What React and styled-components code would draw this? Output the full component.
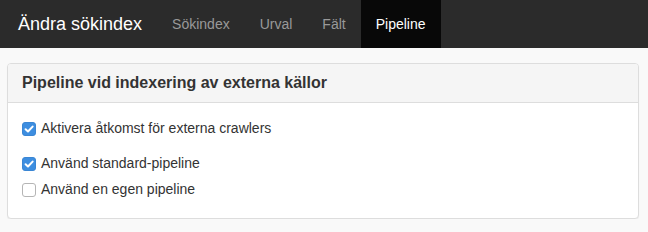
import React, { useState } from 'react';
import styled, { createGlobalStyle } from 'styled-components';

const GlobalStyle = createGlobalStyle`
  html, body {
    margin: 0;
    padding: 0;
    background: #f9f9f9;
    font-family: "Liberation Sans", Arial, Helvetica, sans-serif;
    color: #333333;
  }
`;

const Navbar = styled.nav`
  display: flex;
  align-items: stretch;
  height: 48px;
  background: #2b2b2b;
  padding-left: 3px;
`;

const Brand = styled.div`
  display: flex;
  align-items: center;
  padding: 0 15px;
  font-size: 18px;
  color: #ffffff;
  white-space: nowrap;
`;

const NavList = styled.ul`
  display: flex;
  list-style: none;
  margin: 0;
  padding: 0;
`;

const NavItem = styled.li`
  display: flex;
  align-items: center;
  padding: 0 15px;
  font-size: 14px;
  color: ${(p) => (p.$active ? '#ffffff' : '#999999')};
  background: ${(p) => (p.$active ? '#080808' : 'transparent')};
  cursor: pointer;
`;

const Main = styled.div`
  padding: 15px 9px 0 7px;
`;

const Panel = styled.section`
  background: #ffffff;
  border: 1px solid #dddddd;
  border-radius: 4px;
  box-shadow: 0 1px 1px rgba(0, 0, 0, 0.05);
`;

const PanelHeading = styled.div`
  background: #f5f5f5;
  border-bottom: 1px solid #dddddd;
  border-radius: 3px 3px 0 0;
  padding: 0 14px;
  height: 38px;
  display: flex;
  align-items: center;
`;

const PanelTitle = styled.h3`
  margin: 0;
  font-size: 16px;
  font-weight: bold;
  color: #333333;
`;

const PanelBody = styled.div`
  padding: 15px 14px 19px;
`;

const Group = styled.div`
  display: flex;
  flex-direction: column;
  gap: 6px;
  margin-bottom: ${(p) => (p.$last ? '0' : '15px')};
`;

const CheckRow = styled.label`
  display: flex;
  align-items: center;
  gap: 5px;
  height: 20px;
  font-size: 14px;
  color: #333333;
  cursor: pointer;
`;

const Box = styled.span`
  width: 14px;
  height: 14px;
  box-sizing: border-box;
  border-radius: 3px;
  display: flex;
  align-items: center;
  justify-content: center;
  background: ${(p) => (p.$checked ? '#3d8ee0' : '#ffffff')};
  border: 1px solid ${(p) => (p.$checked ? '#3a86d4' : '#b5b5b5')};
  margin-top: 1px;
`;

const Check = ({ checked, label, onToggle }) => (
  <CheckRow onClick={onToggle}>
    <Box $checked={checked}>
      {checked && (
        <svg width="10" height="10" viewBox="0 0 10 10">
          <path d="M1.6 5.2 L4 7.5 L8.6 2.6" fill="none" stroke="#ffffff" strokeWidth="2" strokeLinecap="round" strokeLinejoin="round" />
        </svg>
      )}
    </Box>
    {label}
  </CheckRow>
);

const App = () => {
  const [crawlers, setCrawlers] = useState(true);
  const [standard, setStandard] = useState(true);
  const [custom, setCustom] = useState(false);

  return (
    <>
      <GlobalStyle />
      <Navbar>
        <Brand>Ändra sökindex</Brand>
        <NavList>
          <NavItem>Sökindex</NavItem>
          <NavItem>Urval</NavItem>
          <NavItem>Fält</NavItem>
          <NavItem $active>Pipeline</NavItem>
        </NavList>
      </Navbar>
      <Main>
        <Panel>
          <PanelHeading>
            <PanelTitle>Pipeline vid indexering av externa källor</PanelTitle>
          </PanelHeading>
          <PanelBody>
            <Group>
              <Check checked={crawlers} label="Aktivera åtkomst för externa crawlers" onToggle={() => setCrawlers(!crawlers)} />
            </Group>
            <Group $last>
              <Check checked={standard} label="Använd standard-pipeline" onToggle={() => setStandard(!standard)} />
              <Check checked={custom} label="Använd en egen pipeline" onToggle={() => setCustom(!custom)} />
            </Group>
          </PanelBody>
        </Panel>
      </Main>
    </>
  );
};

export default App;
